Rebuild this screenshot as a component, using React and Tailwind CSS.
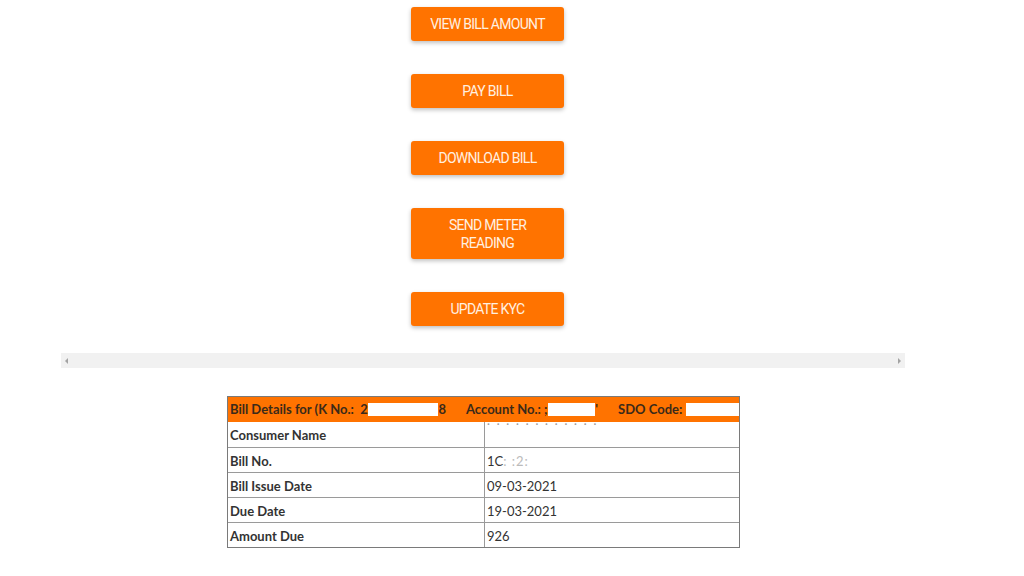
import React from "react";

const actions = [
  { label: "VIEW BILL AMOUNT", tall: false },
  { label: "PAY BILL", tall: false },
  { label: "DOWNLOAD BILL", tall: false },
  { label: "SEND METER READING", tall: true },
  { label: "UPDATE KYC", tall: false },
];

const rows = [
  ["Consumer Name", "name"],
  ["Bill No.", "billno"],
  ["Bill Issue Date", "09-03-2021"],
  ["Due Date", "19-03-2021"],
  ["Amount Due", "926"],
];

const Redact = ({ w }) => (
  <span className="inline-block h-[13px] bg-white align-middle" style={{ width: w }} />
);

const Cell = ({ value }) => {
  if (value === "name")
    return <span className="block -mt-[10px] text-[11px] tracking-[2px] text-[#999]">· · · · · · · · · · · ·</span>;
  if (value === "billno")
    return (
      <span>
        1C<span className="text-[#bbb] tracking-[1px]">:&nbsp;:2:</span>
      </span>
    );
  return value;
};

export default function App() {
  return (
    <div className="min-h-[576px] w-[1024px] bg-white" style={{ fontFamily: "Roboto, 'Liberation Sans', sans-serif" }}>
      <div className="flex w-[975px] flex-col items-center pt-[7px] gap-[33px]">
        {actions.map((a) => (
          <button
            key={a.label}
            className={`w-[153px] ${a.tall ? "h-[51px] px-8 leading-[18px]" : "h-[34px]"} rounded-[3px] bg-[#ff7300] text-[14px] tracking-[-0.7px] text-[#fff0e0] shadow-[0_2px_4px_rgba(0,0,0,0.25)]`}
          >
            {a.label}
          </button>
        ))}
      </div>

      <div className="ml-[61px] mt-[27px] flex h-[15px] w-[844px] items-center justify-between bg-[#f1f1f1] px-[4px]">
        <span className="h-0 w-0 border-y-[3px] border-r-[3px] border-y-transparent border-r-[#a3a3a3]" />
        <span className="h-0 w-0 border-y-[3px] border-l-[3px] border-y-transparent border-l-[#a3a3a3]" />
      </div>

      <div className="ml-[227px] mt-[28px] w-[513px] border border-[#7a7a7a]" style={{ fontFamily: "Lato, 'Open Sans', sans-serif" }}>
        <div className="flex h-[25px] items-center bg-[#ff7300] pl-[2px] text-[13px] font-bold text-[#3a2a1a] whitespace-nowrap overflow-hidden">
          <span>Bill Details for (K No.:&nbsp; 2</span>
          <Redact w={74} />
          <span>8</span>
          <span className="ml-[20px]">Account No.: ;</span>
          <Redact w={50} />
          <span>'</span>
          <span className="ml-[20px]">SDO Code:&nbsp;</span>
          <Redact w={56} />
        </div>
        {rows.map(([k, v], i) => (
          <div key={k} className={`flex h-[25px] text-[13px] text-[#333] ${i > 0 ? "border-t border-[#9a9a9a]" : ""}`}>
            <div className="w-[256px] pl-[2px] pt-[4px] font-bold">{k}</div>
            <div className="flex-1 border-l border-[#9a9a9a] pl-[2px] pt-[4px]">
              <Cell value={v} />
            </div>
          </div>
        ))}
      </div>
    </div>
  );
}
